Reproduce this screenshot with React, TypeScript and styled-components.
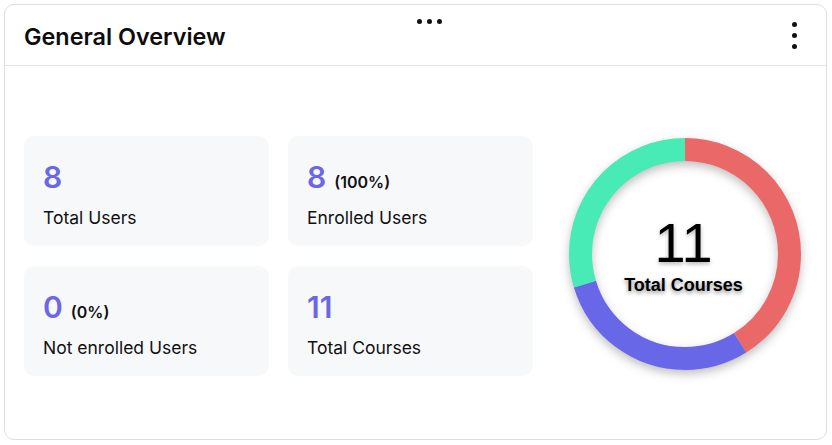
import styled, {createGlobalStyle} from 'styled-components';

const GlobalStyle = createGlobalStyle`
  html, body {
    margin: 0;
    padding: 0;
    background: #fff;
  }
  body {
    font-family: Inter, 'Noto Sans', sans-serif;
    color: #111;
  }
`;

const Page = styled.div`
  padding: 4px 5px 5px 4px;
`;

const Card = styled.div`
  position: relative;
  height: 436px;
  border: 1px solid #dcdfe3;
  border-radius: 10px;
  box-sizing: border-box;
  background: #fff;
`;

const Header = styled.div`
  display: flex;
  align-items: center;
  justify-content: space-between;
  height: 60px;
  padding: 0 21px 0 19px;
  border-bottom: 1px solid #e3e5e8;
`;

const Title = styled.h2`
  margin: 0;
  padding-top: 2px;
  font-size: 23.4px;
  font-weight: 600;
  color: #0d0d0d;
`;

const DragHandle = styled.div`
  position: absolute;
  top: 14px;
  left: 412px;
  display: flex;
  gap: 5px;
`;

const Dot = styled.span`
  width: 5px;
  height: 5px;
  border-radius: 50%;
  background: #111;
`;

const Kebab = styled.button`
  display: flex;
  flex-direction: column;
  gap: 6px;
  padding: 4px 8px;
  border: 0;
  background: none;
  cursor: pointer;
`;

const Body = styled.div`
  display: flex;
  align-items: center;
  padding: 70px 0 0 19px;
`;

const Tiles = styled.div`
  display: grid;
  grid-template-columns: 245px 245px;
  grid-auto-rows: 110px;
  column-gap: 19px;
  row-gap: 20px;
`;

const Tile = styled.div`
  display: flex;
  flex-direction: column;
  justify-content: center;
  padding: 0 19px;
  background: #f7f8fa;
  border-radius: 10px;
`;

const ValueRow = styled.div`
  display: flex;
  align-items: baseline;
  gap: 8px;
  margin-top: 5px;
`;

const Value = styled.span`
  font-size: 30px;
  font-weight: 600;
  color: #6b67e8;
  line-height: 36px;
`;

const Percent = styled.span`
  font-size: 16px;
  font-weight: 600;
  color: #111;
`;

const Label = styled.div`
  margin-top: 12px;
  font-size: 17.5px;
  color: #111;
`;

const ChartWrap = styled.div`
  position: relative;
  width: 240px;
  height: 240px;
  margin: -4px 0 0 32px;
`;

const Donut = styled.svg`
  display: block;
  filter: drop-shadow(0 4px 5px rgba(0, 0, 0, 0.25));
`;

const Center = styled.div`
  position: absolute;
  inset: 0;
  display: flex;
  flex-direction: column;
  align-items: center;
  justify-content: center;
  font-family: 'Liberation Sans', Arial, sans-serif;
  color: #000;
  padding: 2px 3px 0 0;
`;

const BigNumber = styled.div`
  font-size: 56px;
  line-height: 56px;
  text-shadow: 0 2px 4px rgba(0, 0, 0, 0.3);
`;

const CenterLabel = styled.div`
  font-size: 18px;
  font-weight: 700;
  margin-top: 4px;
  text-shadow: 0 2px 4px rgba(0, 0, 0, 0.45);
`;

type Stat = {value: string; percent?: string; label: string};

const stats: Stat[] = [
  {value: '8', label: 'Total Users'},
  {value: '8', percent: '(100%)', label: 'Enrolled Users'},
  {value: '0', percent: '(0%)', label: 'Not enrolled Users'},
  {value: '11', label: 'Total Courses'},
];

// degrees from 12 o'clock, clockwise
const segments = [
  {color: '#ea6868', from: 0, to: 148},
  {color: '#6767e8', from: 148, to: 253},
  {color: '#48eab5', from: 253, to: 360},
];

const R = 104.5;
const C = 2 * Math.PI * R;

export default function App() {
  return (
    <Page>
      <GlobalStyle />
      <Card>
        <DragHandle>
          <Dot />
          <Dot />
          <Dot />
        </DragHandle>
        <Header>
          <Title>General Overview</Title>
          <Kebab aria-label="menu">
            <Dot />
            <Dot />
            <Dot />
          </Kebab>
        </Header>
        <Body>
          <Tiles>
            {stats.map(s => (
              <Tile key={s.label}>
                <ValueRow>
                  <Value>{s.value}</Value>
                  {s.percent && <Percent>{s.percent}</Percent>}
                </ValueRow>
                <Label>{s.label}</Label>
              </Tile>
            ))}
          </Tiles>
          <ChartWrap>
            <Donut width="240" height="240" viewBox="0 0 240 240">
              <g transform="rotate(-90 120 120)">
                {segments.map(seg => {
                  const len = ((seg.to - seg.from) / 360) * C;
                  return (
                    <circle
                      key={seg.color}
                      cx="120"
                      cy="120"
                      r={R}
                      fill="none"
                      stroke={seg.color}
                      strokeWidth="23"
                      strokeDasharray={`${len} ${C - len}`}
                      strokeDashoffset={-(seg.from / 360) * C}
                    />
                  );
                })}
              </g>
            </Donut>
            <Center>
              <BigNumber>11</BigNumber>
              <CenterLabel>Total Courses</CenterLabel>
            </Center>
          </ChartWrap>
        </Body>
      </Card>
    </Page>
  );
}
